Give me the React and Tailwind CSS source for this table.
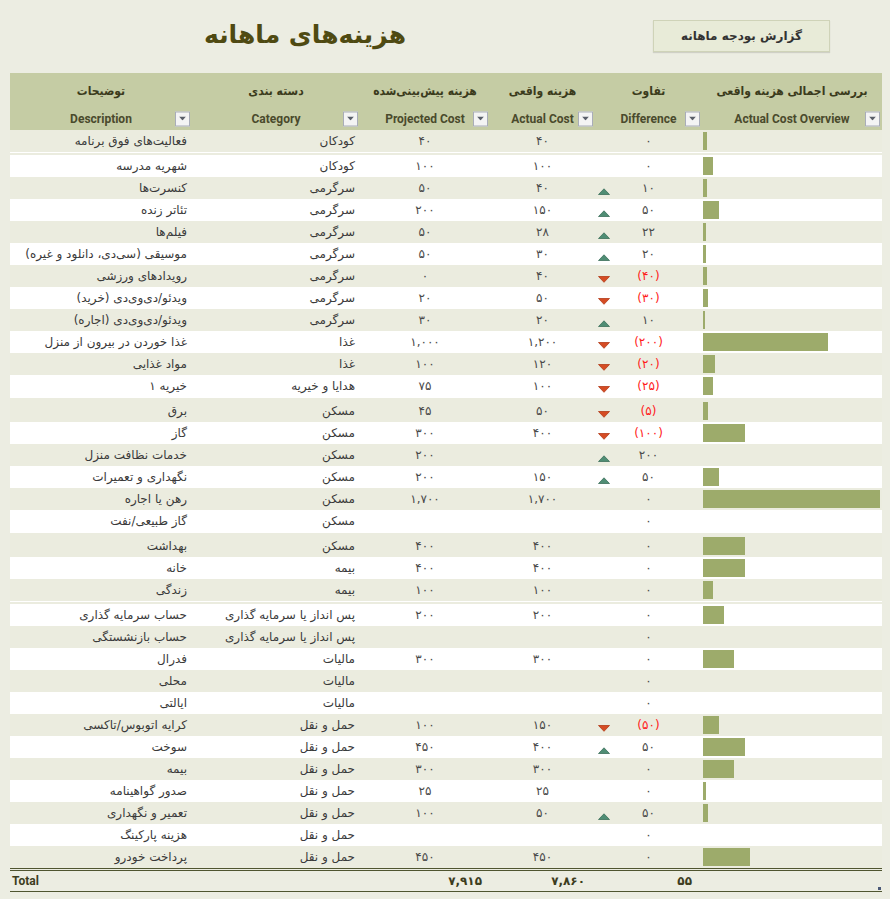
import React from 'react'

const fa = (n) =>
  n.toLocaleString('en-US').replace(/[0-9]/g, (d) => '۰۱۲۳۴۵۶۷۸۹'[d])

// [description, category, projected, actual] ; null = empty cell
const groups = [
  [['فعالیت‌های فوق برنامه', 'کودکان', 40, 40]],
  [
    ['شهریه مدرسه', 'کودکان', 100, 100],
    ['کنسرت‌ها', 'سرگرمی', 50, 40],
    ['تئاتر زنده', 'سرگرمی', 200, 150],
    ['فیلم‌ها', 'سرگرمی', 50, 28],
    ['موسیقی (سی‌دی، دانلود و غیره)', 'سرگرمی', 50, 30],
    ['رویدادهای ورزشی', 'سرگرمی', 0, 40],
    ['ویدئو/دی‌وی‌دی (خرید)', 'سرگرمی', 20, 50],
    ['ویدئو/دی‌وی‌دی (اجاره)', 'سرگرمی', 30, 20],
    ['غذا خوردن در بیرون از منزل', 'غذا', 1000, 1200],
    ['مواد غذایی', 'غذا', 100, 120],
    ['خیریه ۱', 'هدایا و خیریه', 75, 100],
  ],
  [
    ['برق', 'مسکن', 45, 50],
    ['گاز', 'مسکن', 300, 400],
    ['خدمات نظافت منزل', 'مسکن', 200, null],
    ['نگهداری و تعمیرات', 'مسکن', 200, 150],
    ['رهن یا اجاره', 'مسکن', 1700, 1700],
    ['گاز طبیعی/نفت', 'مسکن', null, null],
  ],
  [
    ['بهداشت', 'مسکن', 400, 400],
    ['خانه', 'بیمه', 400, 400],
    ['زندگی', 'بیمه', 100, 100],
  ],
  [
    ['حساب سرمایه گذاری', 'پس انداز یا سرمایه گذاری', 200, 200],
    ['حساب بازنشستگی', 'پس انداز یا سرمایه گذاری', null, null],
    ['فدرال', 'مالیات', 300, 300],
    ['محلی', 'مالیات', null, null],
    ['ایالتی', 'مالیات', null, null],
    ['کرایه اتوبوس/تاکسی', 'حمل و نقل', 100, 150],
    ['سوخت', 'حمل و نقل', 450, 400],
    ['بیمه', 'حمل و نقل', 300, 300],
    ['صدور گواهینامه', 'حمل و نقل', 25, 25],
    ['تعمیر و نگهداری', 'حمل و نقل', 100, 50],
    ['هزینه پارکینگ', 'حمل و نقل', null, null],
    ['پرداخت خودرو', 'حمل و نقل', 450, 450],
  ],
]

const cols = 'grid grid-cols-[182px_168px_130px_105px_107px_180px]'
const faFont = { fontFamily: '"DejaVu Sans", sans-serif' }
const faHead = { fontFamily: '"DejaVu Sans Condensed", "DejaVu Sans", sans-serif' }

function Dropdown() {
  return (
    <span className="absolute right-[2px] top-1/2 -translate-y-1/2 w-[15px] h-[15px] bg-[#f4f4f4] border border-[#a9adb8] flex items-center justify-center">
      <svg width="7" height="4" viewBox="0 0 7 4"><path d="M0 0h7L3.5 4z" fill="#5a5f6a" /></svg>
    </span>
  )
}

function Arrow({ up }) {
  return up ? (
    <svg width="12" height="7" viewBox="0 0 12 7" className="mt-[6px]">
      <path d="M0.5 6.5 6 0.8 11.5 6.5z" fill="#4f8d74" stroke="#3c705b" strokeWidth="0.8" />
    </svg>
  ) : (
    <svg width="12" height="7" viewBox="0 0 12 7" className="mt-[6px]">
      <path d="M0.5 0.5h11L6 6.3z" fill="#d54c24" stroke="#b23a17" strokeWidth="0.8" />
    </svg>
  )
}

function Row({ r, shade }) {
  const [desc, cat, proj, act] = r
  const diff = (proj || 0) - (act || 0)
  return (
    <div className={`${cols} h-[22px] items-center text-[12px] ${shade ? 'bg-[#ebecdf]' : 'bg-white'}`} style={faFont}>
      <div dir="rtl" className="pr-[5px] text-[#3a3a3a] whitespace-nowrap">{desc}</div>
      <div dir="rtl" className="pr-[5px] text-[#3a3a3a] whitespace-nowrap">{cat}</div>
      <div className="text-center text-[#4a4a4a]">{proj === null ? '' : fa(proj)}</div>
      <div className="text-center text-[#4a4a4a]">{act === null ? '' : fa(act)}</div>
      <div className="grid grid-cols-[16px_1fr_16px] items-center h-full">
        <div className="flex justify-center pl-[1px]">{diff !== 0 && <Arrow up={diff > 0} />}</div>
        <div className={`text-center ${diff < 0 ? 'text-[#ff1a1a]' : 'text-[#4a4a4a]'}`}>
          {diff < 0 ? `(${fa(-diff)})` : fa(diff)}
        </div>
        <div />
      </div>
      <div className="h-full flex items-center pl-[1px]">
        {act ? <div className="h-[18px] bg-[#9dab6b]" style={{ width: Math.max(2, (act * 177) / 1700) }} /> : null}
      </div>
    </div>
  )
}

export default function App() {
  let i = 0
  return (
    <div className="w-[890px] h-[899px] bg-[#ecede2] overflow-hidden">
      <div className="flex h-[73px]">
        <h1 className="ml-[204px] mt-[16px] text-[25px] font-bold text-[#4f4a12]" style={faFont} dir="rtl">
          هزینه‌های ماهانه
        </h1>
        <div
          className="ml-auto mr-[60px] mt-[20px] w-[177px] h-[32px] bg-[#e8ebd8] border border-[#cfd3b8] shadow-[0_1px_1px_rgba(0,0,0,0.12)] flex items-center justify-center text-[12px] font-bold text-[#333]"
          style={faFont}
          dir="rtl"
        >
          گزارش بودجه ماهانه
        </div>
      </div>

      <div className="ml-[10px] w-[872px] relative">
        <div className="bg-[#c5cca4] h-[57px]">
          <div className={`${cols} h-[34px] items-center pt-[2px] text-[12px] font-bold text-[#3b3b1c]`} style={faHead}>
            {['توضیحات', 'دسته بندی', 'هزینه پیش‌بینی‌شده', 'هزینه واقعی', 'تفاوت', 'بررسی اجمالی هزینه واقعی'].map((t) => (
              <div key={t} dir="rtl" className="text-center whitespace-nowrap">{t}</div>
            ))}
          </div>
          <div className={`${cols} h-[23px] items-center text-[12px] font-bold text-[#4a4a2c]`} style={{ fontFamily: 'Roboto, sans-serif' }}>
            {['Description', 'Category', 'Projected Cost', 'Actual Cost', 'Difference', 'Actual Cost Overview'].map((t) => (
              <div key={t} className="relative h-full flex items-center justify-center">
                {t}
                <Dropdown />
              </div>
            ))}
          </div>
        </div>

        {groups.map((g, gi) => (
          <div key={gi}>
            {gi > 0 && <div className="h-[3px] border-t border-white bg-[#ebecdf]" />}
            {g.map((r) => {
              const shade = i % 2 === 0
              i++
              return <Row key={r[0] + i} r={r} shade={shade} />
            })}
          </div>
        ))}

        <div className="border-t-[3px] border-double border-[#4f5530] border-b border-b-[#4f5530] h-[24px] flex items-center">
          <div className={`${cols} w-full text-[12px] font-bold text-[#3d3d1e]`}>
            <div className="pl-[2px]" style={{ fontFamily: 'Roboto, sans-serif' }}>Total</div>
            <div />
            <div className="text-right pr-[8px]" style={faFont}>{fa(7915)}</div>
            <div className="text-right pr-[10px]" style={faFont}>{fa(7860)}</div>
            <div className="text-right pr-[10px]" style={faFont}>{fa(55)}</div>
            <div />
          </div>
        </div>
        <span className="absolute right-[1px] bottom-[2px] w-[3px] h-[3px] bg-[#4b5a78]" />
      </div>
    </div>
  )
}
